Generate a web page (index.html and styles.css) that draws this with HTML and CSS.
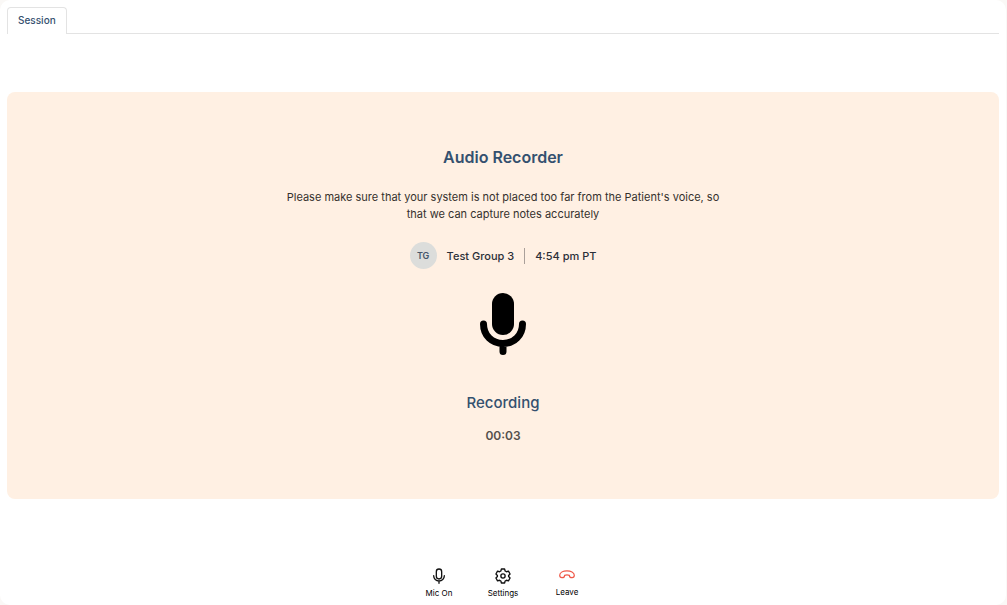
FILE: index.html
```html
<!DOCTYPE html>
<html lang="en">
<head>
<meta charset="utf-8">
<meta name="viewport" content="width=device-width, initial-scale=1">
<title>Audio Recorder</title>
<link rel="stylesheet" href="styles.css">
</head>
<body>
<div class="panel">
  <nav class="tabs" role="tablist">
    <button class="tab" type="button" role="tab" aria-selected="true">Session</button>
    <span class="tabs-line"></span>
  </nav>
  <main class="stage">
    <section class="card">
      <h1 class="title">Audio Recorder</h1>
      <p class="hint">Please make sure that your system is not placed too far from the Patient's voice, so that we can capture notes accurately</p>
      <div class="meta">
        <span class="avatar">TG</span>
        <span>Test Group 3</span>
        <span class="divider"></span>
        <time>4:54 pm PT</time>
      </div>
      <svg class="mic" viewBox="0 0 46 62" aria-hidden="true">
        <rect x="12" y="0" width="22" height="42" rx="11"/>
        <path d="M3.5 31C3.5 42.500 12 50.500 23 50.500S42.500 42.500 42.500 31M23 51V58.500" fill="none" stroke="#000" stroke-width="7" stroke-linecap="round"/>
      </svg>
      <h2 class="status">Recording</h2>
      <div class="timer">00:03</div>
    </section>
  </main>
  <footer class="controls">
    <button class="control" type="button">
      <svg class="icon" viewBox="0 0 24 24" aria-hidden="true"><rect x="8" y="1.500" width="8" height="15" rx="4"/><path d="M4 11.500a8 8 0 0 0 16 0M12 19.500v3.500"/></svg>
      <span>Mic On</span>
    </button>
    <button class="control" type="button">
      <svg class="icon" viewBox="0 0 24 24" aria-hidden="true"><circle cx="12" cy="12" r="3.200"/><path d="M9.600 1.500h4.800l.8 3 2 1.100 3-.8 2.400 4.200-2.200 2.200v1.600l2.200 2.200-2.400 4.200-3-.8-2 1.100-.8 3H9.600l-.8-3-2-1.100-3 .8L1.400 15l2.200-2.200v-1.600L1.400 9l2.400-4.200 3 .8 2-1.100z"/></svg>
      <span>Settings</span>
    </button>
    <button class="control" type="button">
      <svg class="icon icon-leave" viewBox="0 0 16 15" aria-hidden="true"><path d="M.7 7.300C.7 1.300 15.300 1.300 15.300 7.300c0 1.900-.7 2.400-2.200 2.400-1.900 0-2.700-.5-2.700-2.300-1.500-.7-3.300-.7-4.800 0 0 1.800-.8 2.300-2.700 2.300C1.400 9.700.7 9.200.7 7.300z"/></svg>
      <span>Leave</span>
    </button>
  </footer>
</div>
</body>
</html>
```
FILE: styles.css
```css
* {
  box-sizing: border-box;
}

body {
  margin: 0;
  background: #faf8f6;
  color: #2b2f38;
  font-family: Inter, "Liberation Sans", sans-serif;
  font-weight: 500;
}

button {
  border: 0;
  background: none;
  color: inherit;
  font: inherit;
  cursor: pointer;
}

.panel {
  display: flex;
  flex-direction: column;
  min-height: 100vh;
  margin-right: 1px;
  padding: 7px;
  border-radius: 10px;
  background: #fff;
}

.tabs {
  display: flex;
  align-items: flex-end;
}

.tab {
  height: 27px;
  padding: 0 10px 2px;
  border: 1px solid #e3e3e3;
  border-bottom: 0;
  border-radius: 4px 4px 0 0;
  color: #34506f;
  font-size: 10px;
  line-height: 24px;
}

.tabs-line {
  flex: 1;
  height: 1px;
  background: #e3e3e3;
}

.stage {
  display: flex;
  flex: 1;
  flex-direction: column;
  justify-content: center;
}

.card {
  display: flex;
  flex-direction: column;
  align-items: center;
  padding: 54px 24px 55px;
  border-radius: 8px;
  background: #fff0e3;
}

.title,
.status {
  margin: 0;
  color: #34506f;
}

.title {
  font-size: 16px;
  font-weight: 600;
  line-height: 22px;
}

.hint {
  max-width: 440px;
  margin: 21px 0 19px;
  color: #35302d;
  font-size: 11px;
  font-weight: 400;
  line-height: 17px;
  text-align: center;
}

.meta {
  display: flex;
  align-items: center;
  gap: 10px;
  font-size: 11px;
  line-height: 16px;
}

.avatar {
  width: 27px;
  height: 27px;
  border-radius: 50%;
  background: #dcdddb;
  color: #46566a;
  font-size: 9px;
  font-weight: 600;
  line-height: 27px;
  text-align: center;
}

.divider {
  width: 1px;
  height: 16px;
  background: #aaa09a;
}

.mic {
  width: 46px;
  height: 62px;
  margin: 24px 0 38px;
}

.status {
  font-size: 15px;
  font-weight: 500;
  line-height: 20px;
}

.timer {
  margin-top: 15px;
  color: #54504d;
  font-size: 12px;
  font-weight: 600;
  line-height: 16px;
}

.controls {
  display: flex;
  justify-content: center;
  gap: 16px;
  padding-top: 11px;
}

.control {
  display: flex;
  flex-direction: column;
  align-items: center;
  gap: 4px;
  width: 48px;
  padding: 0;
  color: #000;
  font-size: 8px;
  font-weight: 400;
  line-height: 10px;
}

.icon {
  width: 16px;
  height: 16px;
  fill: none;
  stroke: #111;
  stroke-width: 2;
  stroke-linecap: round;
  stroke-linejoin: round;
}

.icon-leave {
  height: 15px;
  stroke: #ef5848;
  stroke-width: 1.2;
}
```
